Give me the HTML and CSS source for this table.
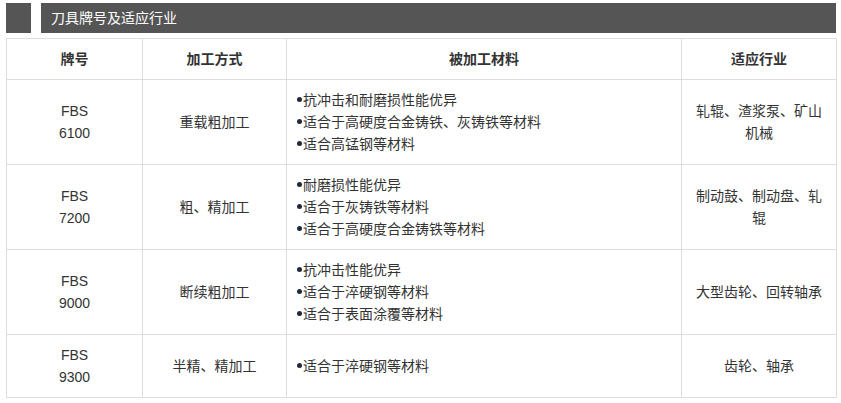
FILE: index.html
```html
<!DOCTYPE html>
<html lang="zh-CN">
<head>
<meta charset="utf-8">
<title>刀具牌号及适应行业</title>
<link rel="stylesheet" href="styles.css">
</head>
<body>
<div class="section-head">
  <div class="head-mark"></div>
  <div class="head-title">刀具牌号及适应行业</div>
</div>
<table class="grade-table">
  <colgroup>
    <col class="c1"><col class="c2"><col class="c3"><col class="c4">
  </colgroup>
  <thead>
    <tr><th>牌号</th><th>加工方式</th><th>被加工材料</th><th>适应行业</th></tr>
  </thead>
  <tbody>
    <tr>
      <td class="center">FBS<br>6100</td>
      <td class="center">重载粗加工</td>
      <td class="left">
        <div class="item"><span class="dot"></span>抗冲击和耐磨损性能优异</div>
        <div class="item"><span class="dot"></span>适合于高硬度合金铸铁、灰铸铁等材料</div>
        <div class="item"><span class="dot"></span>适合高锰钢等材料</div>
      </td>
      <td class="center">轧辊、渣浆泵、矿山机械</td>
    </tr>
    <tr>
      <td class="center">FBS<br>7200</td>
      <td class="center">粗、精加工</td>
      <td class="left">
        <div class="item"><span class="dot"></span>耐磨损性能优异</div>
        <div class="item"><span class="dot"></span>适合于灰铸铁等材料</div>
        <div class="item"><span class="dot"></span>适合于高硬度合金铸铁等材料</div>
      </td>
      <td class="center">制动鼓、制动盘、轧辊</td>
    </tr>
    <tr>
      <td class="center">FBS<br>9000</td>
      <td class="center">断续粗加工</td>
      <td class="left">
        <div class="item"><span class="dot"></span>抗冲击性能优异</div>
        <div class="item"><span class="dot"></span>适合于淬硬钢等材料</div>
        <div class="item"><span class="dot"></span>适合于表面涂覆等材料</div>
      </td>
      <td class="center">大型齿轮、回转轴承</td>
    </tr>
    <tr>
      <td class="center">FBS<br>9300</td>
      <td class="center">半精、精加工</td>
      <td class="left">
        <div class="item"><span class="dot"></span>适合于淬硬钢等材料</div>
      </td>
      <td class="center">齿轮、轴承</td>
    </tr>
  </tbody>
</table>
</body>
</html>
```
FILE: styles.css
```css
html, body {
  margin: 0;
  padding: 0;
  background: #fff;
}
body {
  font-family: "Liberation Sans", "Noto Sans CJK SC", sans-serif;
  font-size: 14px;
  color: #333;
}
.section-head {
  display: flex;
  gap: 10px;
  height: 30px;
  margin: 3px 5px 0 6px;
}
.head-mark {
  width: 25px;
  background: #555;
}
.head-title {
  flex: 1;
  background: #555;
  color: #fff;
  font-size: 14px;
  line-height: 30px;
  padding-left: 10px;
}
.grade-table {
  margin: 5px 0 0 6px;
  width: 830px;
  table-layout: fixed;
  border-collapse: collapse;
}
.c1 { width: 136px; }
.c2 { width: 144px; }
.c3 { width: 395px; }
.c4 { width: 155px; }
.grade-table th,
.grade-table td {
  border: 1px solid #ddd;
  padding: 9px 10px;
  line-height: 22px;
  vertical-align: middle;
}
.grade-table th {
  font-weight: bold;
  text-align: center;
  color: #333;
}
.center { text-align: center; }
.left { text-align: left; }
.item {
  white-space: nowrap;
}
.dot {
  display: inline-block;
  width: 5px;
  height: 5px;
  border-radius: 50%;
  background: #1f2a3a;
  margin-right: 1px;
  vertical-align: 3px;
}
```
